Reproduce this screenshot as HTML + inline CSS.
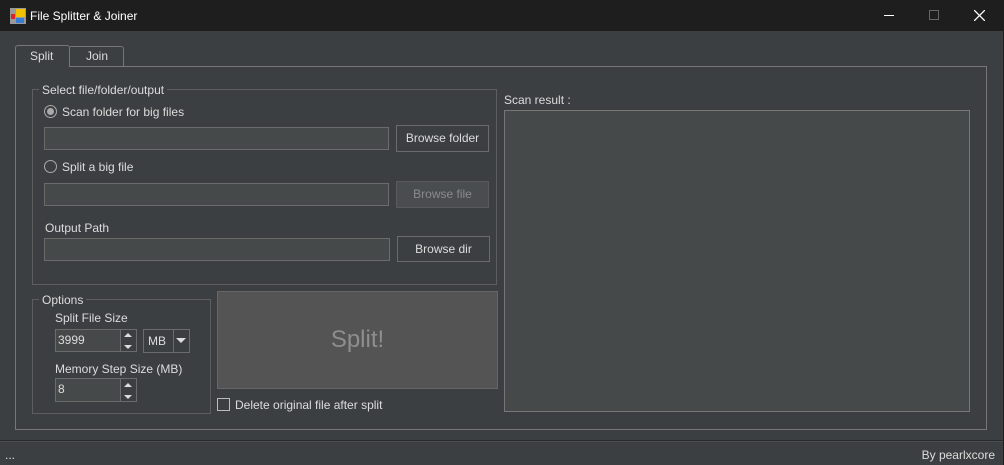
<!DOCTYPE html>
<html><head><meta charset="utf-8"><style>
*{box-sizing:border-box;margin:0;padding:0}
body{width:1004px;height:465px;background:#3c3f41;font-family:"Liberation Sans",sans-serif;font-size:12px;color:#dcdcdc;position:relative;overflow:hidden}
.a{position:absolute}
.t{position:absolute;white-space:nowrap;line-height:14px}
.inp{position:absolute;background:#45494a;border:1px solid #6b6b6b}
.btn{position:absolute;border:1px solid #6b6b6b;background:#3c3f41;color:#dcdcdc;text-align:center}
.grp{position:absolute;border:1px solid #5e5e5e}
.leg{position:absolute;background:#3c3f41;padding:0 3px;line-height:14px}
</style></head><body>
<div class="a" style="left:0;top:0;width:1004px;height:31px;background:#1e1e1e"></div>
<svg class="a" style="left:10px;top:8px" width="16" height="16"><rect x="0" y="0" width="16" height="16" fill="#9a9a9a"/><rect x="6" y="1" width="9" height="8" fill="#f2c200"/><rect x="1" y="6" width="4" height="5" fill="#d22"/><rect x="6" y="10" width="8" height="5" fill="#3a7bd5"/></svg>
<div class="t" style="left:30px;top:9px;color:#fff;font-size:12px">File Splitter &amp; Joiner</div>
<div class="a" style="left:884px;top:15px;width:10px;height:1px;background:#fff"></div>
<div class="a" style="left:929px;top:10px;width:10px;height:10px;border:1px solid #666"></div>
<svg class="a" style="left:974px;top:10px" width="11" height="11"><path d="M0 0L11 11M11 0L0 11" stroke="#fff" stroke-width="1.3"/></svg>
<div class="a" style="left:1003px;top:0;width:1px;height:465px;background:#1e1e1e"></div>
<div class="a" style="left:15px;top:66px;width:972px;height:364px;border:1px solid #777"></div>
<div class="a" style="left:15px;top:45px;width:55px;height:22px;border:1px solid #777;border-bottom:none;background:#3c3f41;border-radius:3px 3px 0 0"></div>
<div class="t" style="left:30px;top:49px">Split</div>
<div class="a" style="left:70px;top:46px;width:54px;height:21px;border:1px solid #777;border-left:none;border-radius:0 3px 0 0"></div>
<div class="t" style="left:86px;top:49px">Join</div>
<div class="grp" style="left:32px;top:89px;width:465px;height:196px"></div>
<div class="leg" style="left:39px;top:83px">Select file/folder/output</div>
<div class="a" style="left:44px;top:105px;width:13px;height:13px;border:1px solid #aaa;border-radius:50%"></div>
<div class="a" style="left:47px;top:108px;width:7px;height:7px;background:#aaa;border-radius:50%"></div>
<div class="t" style="left:62px;top:105px">Scan folder for big files</div>
<div class="inp" style="left:44px;top:127px;width:345px;height:23px"></div>
<div class="btn" style="left:396px;top:125px;width:93px;height:27px;line-height:25px">Browse folder</div>
<div class="a" style="left:44px;top:160px;width:13px;height:13px;border:1px solid #aaa;border-radius:50%"></div>
<div class="t" style="left:62px;top:160px">Split a big file</div>
<div class="inp" style="left:44px;top:183px;width:345px;height:23px"></div>
<div class="btn" style="left:396px;top:181px;width:93px;height:27px;line-height:25px;background:#4a4d4f;color:#8a8a8a;border-color:#5a5a5a">Browse file</div>
<div class="t" style="left:45px;top:221px">Output Path</div>
<div class="inp" style="left:44px;top:238px;width:346px;height:23px"></div>
<div class="btn" style="left:397px;top:236px;width:93px;height:26px;line-height:24px">Browse dir</div>
<div class="grp" style="left:32px;top:299px;width:179px;height:115px"></div>
<div class="leg" style="left:39px;top:293px">Options</div>
<div class="t" style="left:55px;top:311px">Split File Size</div>
<div class="inp" style="left:55px;top:329px;width:82px;height:23px"></div>
<div class="t" style="left:58px;top:333px">3999</div>
<div class="a" style="left:120px;top:330px;width:16px;height:21px;background:#3c3f41;border-left:1px solid #6b6b6b"></div>
<svg class="a" style="left:124px;top:333px" width="8" height="16"><path d="M0 4L4 0L8 4Z M0 12L4 16L8 12Z" fill="#ddd"/></svg>
<div class="inp" style="left:143px;top:329px;width:47px;height:24px;background:#3c3f41"></div>
<div class="t" style="left:148px;top:334px">MB</div>
<div class="a" style="left:173px;top:330px;width:1px;height:22px;background:#6b6b6b"></div>
<svg class="a" style="left:176px;top:338px" width="10" height="6"><path d="M0 0L10 0L5 5Z" fill="#ddd"/></svg>
<div class="t" style="left:55px;top:362px">Memory Step Size (MB)</div>
<div class="inp" style="left:55px;top:378px;width:82px;height:24px"></div>
<div class="t" style="left:58px;top:382px">8</div>
<div class="a" style="left:120px;top:379px;width:16px;height:22px;background:#3c3f41;border-left:1px solid #6b6b6b"></div>
<svg class="a" style="left:124px;top:383px" width="8" height="16"><path d="M0 4L4 0L8 4Z M0 12L4 16L8 12Z" fill="#ddd"/></svg>
<div class="a" style="left:217px;top:291px;width:281px;height:98px;background:#545454;border:1px solid #666;color:#8e8e8e;font-size:24px;text-align:center;line-height:96px">Split!</div>
<div class="a" style="left:217px;top:398px;width:13px;height:13px;border:1px solid #bbb"></div>
<div class="t" style="left:235px;top:398px">Delete original file after split</div>
<div class="t" style="left:504px;top:93px">Scan result :</div>
<div class="inp" style="left:504px;top:110px;width:466px;height:302px;border-color:#777"></div>
<div class="a" style="left:0;top:440px;width:1003px;height:1px;background:#2a2a2a"></div>
<div class="a" style="left:0;top:441px;width:1003px;height:1px;background:#4a4d4f"></div>
<div class="t" style="left:5px;top:448px">...</div>
<div class="t" style="right:9px;top:448px">By pearlxcore</div>
</body></html>
